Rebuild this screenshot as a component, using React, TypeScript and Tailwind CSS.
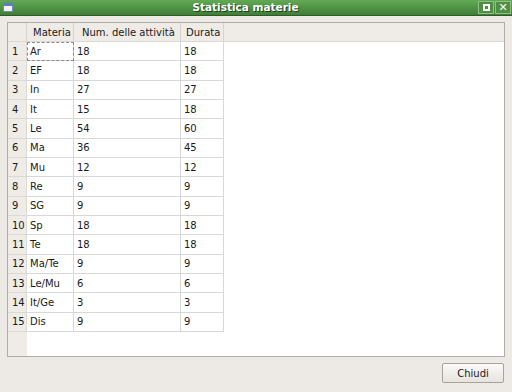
import React from 'react';

const rows: [string, number, number][] = [
  ['Ar', 18, 18],
  ['EF', 18, 18],
  ['In', 27, 27],
  ['It', 15, 18],
  ['Le', 54, 60],
  ['Ma', 36, 45],
  ['Mu', 12, 12],
  ['Re', 9, 9],
  ['SG', 9, 9],
  ['Sp', 18, 18],
  ['Te', 18, 18],
  ['Ma/Te', 9, 9],
  ['Le/Mu', 6, 6],
  ['It/Ge', 3, 3],
  ['Dis', 9, 9],
];

const font = { fontFamily: '"DejaVu Sans", Verdana, sans-serif' };

export default function App() {
  return (
    <div className="w-[512px] h-[392px] bg-[#edeae6] flex flex-col overflow-hidden text-[10px] text-[#1a1a1a] whitespace-nowrap" style={font}>
      {/* title bar */}
      <div className="h-[16px] flex items-center bg-gradient-to-b from-[#62a955] to-[#3f7e36] border-b border-[#2e5a27] shrink-0">
        <div className="ml-[3px] w-[10px] h-[9px] bg-[#f4f4f4] border border-[#6d8bb0] border-t-[3px] border-t-[#5a7ec0]" />
        <div className="flex-1 text-center text-white font-bold text-[10.5px] leading-none [text-shadow:1px_1px_0_#1f3d1a]">
          Statistica materie
        </div>
        <div className="flex gap-[1px] mr-[1px]">
          <div className="w-[16px] h-[13px] border border-[#8fbf84] bg-[#4f8f44] flex items-center justify-center">
            <div className="w-[7px] h-[7px] border-[2px] border-white" />
          </div>
          <div className="w-[16px] h-[13px] border border-[#8fbf84] bg-[#4f8f44] flex items-center justify-center text-white font-bold text-[11px] leading-none">
            ✕
          </div>
        </div>
      </div>

      {/* table */}
      <div className="mt-[6px] ml-[7px] mr-[7px] h-[335px] border border-[#b3aca6] bg-white flex flex-col shrink-0">
        <div className="h-[19px] flex bg-[#efebe7] border-b border-[#dcd8d3] shrink-0">
          <div className="w-[19px] border-r border-[#d6d2cd]" />
          <div className="w-[47px] border-r border-[#d6d2cd] flex items-center pl-[6px]">Materia</div>
          <div className="w-[107px] border-r border-[#d6d2cd] flex items-center pl-[8px]">Num. delle attività</div>
          <div className="w-[43px] border-r border-[#d6d2cd] flex items-center pl-[5px]">Durata</div>
        </div>
        <div className="flex flex-1">
          <div className="w-[19px] bg-[#efebe7] flex flex-col">
            {rows.map((r, i) => (
              <div key={r[0]} className="h-[19.33px] border-b border-r border-[#dcd8d3] flex items-center pl-[4px]">
                {i + 1}
              </div>
            ))}
          </div>
          <div className="flex flex-col">
            {rows.map((r, i) => (
              <div key={r[0]} className="h-[19.33px] flex">
                <div className={`w-[47px] border-b border-r border-[#d8d8d8] flex items-center pl-[3px] ${i === 0 ? 'outline-1 outline-dashed outline-[#8a8a8a] -outline-offset-1' : ''}`}>{r[0]}</div>
                <div className="w-[107px] border-b border-r border-[#d8d8d8] flex items-center pl-[3px]">{r[1]}</div>
                <div className="w-[43px] border-b border-r border-[#d8d8d8] flex items-center pl-[3px]">{r[2]}</div>
              </div>
            ))}
          </div>
        </div>
      </div>

      {/* footer */}
      <div className="flex justify-end mt-[6px] mr-[8px]">
        <button className="w-[62px] h-[20px] border border-[#a8a29c] rounded-[2px] bg-gradient-to-b from-[#fbfaf9] to-[#e7e3df] text-[10px]">
          Chiudi
        </button>
      </div>
    </div>
  );
}
